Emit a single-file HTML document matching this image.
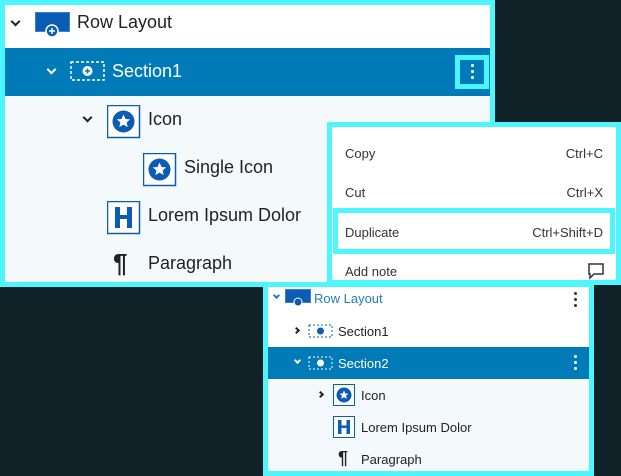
<!DOCTYPE html>
<html><head><style>
*{margin:0;padding:0;box-sizing:border-box}
body{width:621px;height:476px;background:#102228;position:relative;overflow:hidden;font-family:"Liberation Sans",sans-serif;color:#222}
.p1{position:absolute;left:0;top:0;width:495px;height:287px;border:5px solid #4df5ff;background:#f4f9fc;overflow:hidden}
.row{position:absolute;left:0;right:0;display:flex;align-items:center}
.p1 .row{height:48px;font-size:18px}
.chev{position:absolute;width:7px;height:7px;border-right:2px solid #222;border-bottom:2px solid #222}
.down{transform:rotate(45deg)}
.right{transform:rotate(-45deg)}
.t{position:absolute}
.menu{position:absolute;left:327px;top:122px;width:294px;height:163px;border:5px solid #4df5ff;background:#fff;font-size:13px;color:#333}
.mi{position:absolute;left:13px;right:13px;display:flex;justify-content:space-between}
.p2{position:absolute;left:263px;top:282px;width:331px;height:194px;border:5px solid #4df5ff;background:#f4f9fc;overflow:hidden}
.p2 .row{height:32px;font-size:13px}
.dots{position:absolute;width:3px}
.dots i{display:block;width:3px;height:3px;border-radius:50%;background:#fff;margin-bottom:3px}
</style></head><body>
<div class="p1">
 <div class="row" style="top:-5px;background:#fff">
  <div class="chev down" style="left:7px;top:18px"></div>
  <svg class="t" style="left:30px;top:12px" width="38" height="26"><rect x="0.5" y="0.5" width="34" height="19" fill="#0b5cb5" stroke="#3a7fd0"/><circle cx="17" cy="19" r="6" fill="#0b5cb5" stroke="#fff" stroke-width="1.5"/><path d="M17 16v6M14 19h6" stroke="#fff" stroke-width="1.5"/></svg>
  <span class="t" style="left:72px;top:12px">Row Layout</span>
 </div>
 <div class="row" style="top:43px;height:48px;background:#007bb8;color:#fff">
  <div class="chev down" style="left:43px;top:18px;border-color:#fff"></div>
  <svg class="t" style="left:65px;top:13px" width="36" height="22"><rect x="1" y="1" width="33" height="18" fill="none" stroke="#fff" stroke-width="1.5" stroke-dasharray="3 2"/><circle cx="17.5" cy="10" r="5" fill="#fff"/><path d="M17.5 7.5v5M15 10h5" stroke="#007bb8" stroke-width="1.5"/></svg>
  <span class="t" style="left:107px;top:13px">Section1</span>
  <div class="t" style="left:450px;top:7px;width:34px;height:34px;border:5px solid #4df5ff"></div>
  <div class="dots" style="left:466px;top:16px"><i></i><i></i><i></i></div>
 </div>
 <div class="row" style="top:91px">
  <div class="chev down" style="left:79px;top:18px"></div>
  <svg class="t" style="left:102px;top:9px" width="34" height="34"><rect x="0.5" y="0.5" width="32" height="32" fill="#fff" stroke="#0b5cb5" stroke-width="1.5"/><circle cx="16.5" cy="16.5" r="11" fill="#0b5cb5"/><path d="M16.5 9.5l2 4.5 4.7.4-3.6 3.1 1.1 4.6-4.2-2.5-4.2 2.5 1.1-4.6-3.6-3.1 4.7-.4z" fill="#fff"/></svg>
  <span class="t" style="left:143px;top:13px">Icon</span>
 </div>
 <div class="row" style="top:139px">
  <svg class="t" style="left:138px;top:9px" width="34" height="34"><rect x="0.5" y="0.5" width="32" height="32" fill="#fff" stroke="#0b5cb5" stroke-width="1.5"/><circle cx="16.5" cy="16.5" r="11" fill="#0b5cb5"/><path d="M16.5 9.5l2 4.5 4.7.4-3.6 3.1 1.1 4.6-4.2-2.5-4.2 2.5 1.1-4.6-3.6-3.1 4.7-.4z" fill="#fff"/></svg>
  <span class="t" style="left:179px;top:13px">Single Icon</span>
 </div>
 <div class="row" style="top:187px">
  <svg class="t" style="left:102px;top:9px" width="34" height="34"><rect x="0.5" y="0.5" width="32" height="32" fill="#fff" stroke="#0b5cb5" stroke-width="1.5"/><path d="M8 6h5v8h7V6h5v21h-5v-9h-7v9H8z" fill="#0b5cb5"/></svg>
  <span class="t" style="left:143px;top:13px">Lorem Ipsum Dolor</span>
 </div>
 <div class="row" style="top:235px">
  <span class="t" style="left:108px;top:8px;font-size:26px;font-weight:bold">¶</span>
  <span class="t" style="left:143px;top:13px">Paragraph</span>
 </div>
</div>
<div class="menu">
 <div class="mi" style="top:19px"><span>Copy</span><span>Ctrl+C</span></div>
 <div class="mi" style="top:58px"><span>Cut</span><span>Ctrl+X</span></div>
 <div class="t" style="left:1px;right:1px;top:81px;height:46px;border:5px solid #4df5ff"></div>
 <div class="mi" style="top:98px"><span>Duplicate</span><span>Ctrl+Shift+D</span></div>
 <div class="mi" style="top:137px"><span>Add note</span><span></span></div>
 <svg class="t" style="left:255px;top:135px" width="18" height="18"><path d="M2 2h14v10H7l-4 4v-4H2z" fill="none" stroke="#333" stroke-width="1.5"/></svg>
</div>
<div class="p2">
 <div class="row" style="top:-4px;background:#fff;color:#1f7fc0">
  <div class="chev down" style="left:6px;top:10px;width:5px;height:5px;border-color:#1f7fc0"></div>
  <svg class="t" style="left:17px;top:6px" width="28" height="18"><rect x="0.5" y="0.5" width="25" height="13" fill="#0b5cb5" stroke="#3a7fd0"/><circle cx="13" cy="13" r="4" fill="#0b5cb5" stroke="#fff"/></svg>
  <span class="t" style="left:46px;top:8px">Row Layout</span>
  <div class="dots" style="left:306px;top:9px"><i style="background:#333"></i><i style="background:#333"></i><i style="background:#333"></i></div>
 </div>
 <div class="row" style="top:28px;background:#fff">
  <div class="chev right" style="left:26px;top:13px;width:5px;height:5px"></div>
  <svg class="t" style="left:40px;top:9px" width="26" height="14"><rect x="1" y="1" width="23" height="12" fill="none" stroke="#0b5cb5" stroke-dasharray="2 2"/><circle cx="12.5" cy="7" r="3.5" fill="#0b5cb5"/></svg>
  <span class="t" style="left:70px;top:9px">Section1</span>
 </div>
 <div class="row" style="top:60px;background:#007bb8;color:#fff">
  <div class="chev down" style="left:27px;top:11px;width:5px;height:5px;border-color:#fff"></div>
  <svg class="t" style="left:40px;top:9px" width="26" height="14"><rect x="1" y="1" width="23" height="12" fill="none" stroke="#fff" stroke-dasharray="2 2"/><circle cx="12.5" cy="7" r="3.5" fill="#fff"/></svg>
  <span class="t" style="left:70px;top:9px">Section2</span>
  <div class="dots" style="left:306px;top:8px"><i></i><i></i><i></i></div>
 </div>
 <div class="row" style="top:92px">
  <div class="chev right" style="left:50px;top:13px;width:5px;height:5px"></div>
  <svg class="t" style="left:65px;top:5px" width="23" height="23"><rect x="0.5" y="0.5" width="21" height="21" fill="#fff" stroke="#0b5cb5"/><circle cx="11" cy="11" r="7.5" fill="#0b5cb5"/><path d="M11 6.5l1.3 3 3.1.3-2.4 2 .8 3-2.8-1.6-2.8 1.6.8-3-2.4-2 3.1-.3z" fill="#fff"/></svg>
  <span class="t" style="left:93px;top:9px">Icon</span>
 </div>
 <div class="row" style="top:124px">
  <svg class="t" style="left:65px;top:5px" width="23" height="23"><rect x="0.5" y="0.5" width="21" height="21" fill="#fff" stroke="#0b5cb5"/><path d="M5 4h3.5v5.5h5V4H17v14h-3.5v-6h-5v6H5z" fill="#0b5cb5"/></svg>
  <span class="t" style="left:93px;top:9px">Lorem Ipsum Dolor</span>
 </div>
 <div class="row" style="top:156px">
  <span class="t" style="left:70px;top:5px;font-size:18px;font-weight:bold">¶</span>
  <span class="t" style="left:93px;top:9px">Paragraph</span>
 </div>
</div>
</body></html>
